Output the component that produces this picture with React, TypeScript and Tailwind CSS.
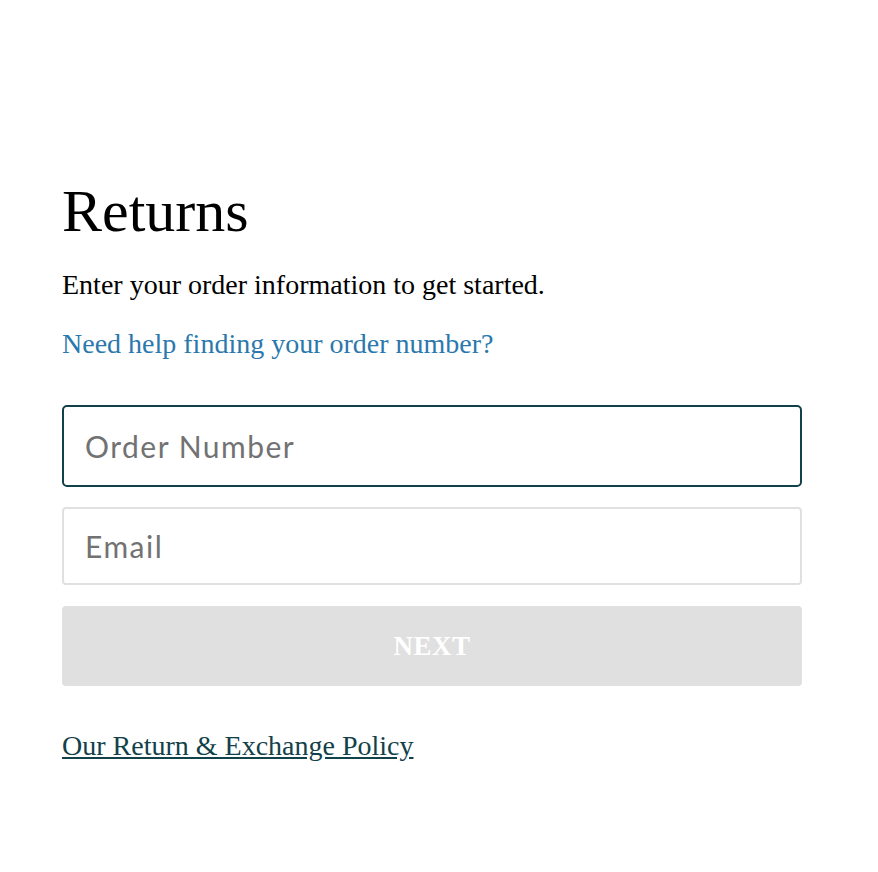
export default function App() {
  return (
    <div className="min-h-screen bg-white" style={{ fontFamily: '"Liberation Serif", "Times New Roman", serif' }}>
      <main className="pl-[62px] pr-[76px] pt-[178px]">
        <h1 className="text-[60px] leading-[66px] text-black">Returns</h1>
        <p className="mt-[23px] text-[28px] leading-[36px] text-black">Enter your order information to get started.</p>
        <a href="#" className="mt-[23px] block text-[28px] leading-[36px] text-[#2b78ad]">
          Need help finding your order number?
        </a>

        <form className="mt-[43px] flex flex-col" onSubmit={(e) => e.preventDefault()}>
          <input
            type="text"
            placeholder="Order Number"
            autoFocus
            className="h-[82px] w-full rounded-[5px] border-2 border-[#12414a] px-[21px] text-[30px] tracking-[1.5px] text-black outline-none placeholder:text-[#727272]"
            style={{ fontFamily: 'Lato, "Open Sans", sans-serif' }}
          />
          <input
            type="email"
            placeholder="Email"
            className="mt-[20px] h-[78px] w-full rounded-[4px] border-2 border-[#e0e0e0] px-[21px] text-[30px] tracking-[1.5px] text-black outline-none placeholder:text-[#727272]"
            style={{ fontFamily: 'Lato, "Open Sans", sans-serif' }}
          />
          <button
            type="submit"
            disabled
            className="mt-[21px] h-[80px] w-full rounded-[4px] bg-[#e0e0e0] text-[27px] font-bold tracking-[0.5px] text-white"
          >
            NEXT
          </button>
        </form>

        <a href="#" className="mt-[42px] inline-block text-[28px] leading-[36px] text-[#12414a] underline underline-offset-[2px]">
          Our Return &amp; Exchange Policy
        </a>
      </main>
    </div>
  );
}
